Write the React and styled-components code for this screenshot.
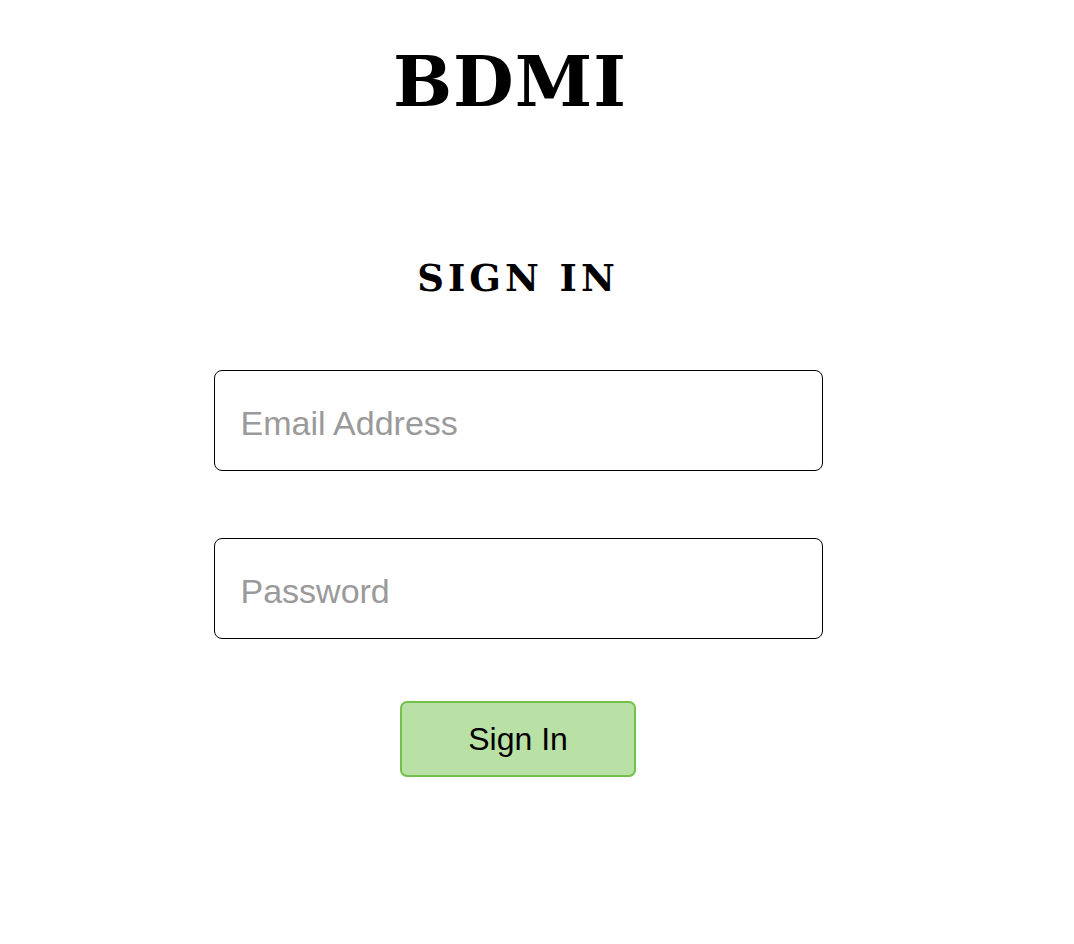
import React from "react";
import styled, { createGlobalStyle } from "styled-components";

const Global = createGlobalStyle`
  html, body { margin: 0; padding: 0; background: #ffffff; }
  body { font-family: "Liberation Sans", Arial, sans-serif; }
`;

const Page = styled.main`
  width: 1036px;
  display: flex;
  flex-direction: column;
  align-items: center;
`;

const Brand = styled.h1`
  margin: 47px 16px 0 0;
  font-family: "DejaVu Serif", "Liberation Serif", serif;
  font-weight: 700;
  font-size: 70px;
  line-height: 70px;
  letter-spacing: 1px;
  color: #000;
`;

const Heading = styled.h2`
  margin: 143px 0 0 0;
  font-family: "DejaVu Serif", "Liberation Serif", serif;
  font-weight: 700;
  font-size: 37px;
  line-height: 37px;
  letter-spacing: 4px;
  color: #000;
`;

const Form = styled.form`
  display: flex;
  flex-direction: column;
  align-items: center;
  margin-top: 73px;
`;

const Field = styled.input`
  box-sizing: border-box;
  width: 609px;
  height: 101px;
  margin-top: ${(p) => p.$gap || 0}px;
  padding: 6px 26px 0;
  border: 1px solid #000;
  border-radius: 8px;
  font-family: "Liberation Sans", Arial, sans-serif;
  font-size: 34px;
  color: #000;
  outline: none;
  background: #fff;
  &::placeholder { color: #9a9a9a; }
`;

const Button = styled.button`
  box-sizing: border-box;
  width: 236px;
  height: 76px;
  margin-top: 62px;
  background: #b9e1a6;
  border: 2px solid #74c04d;
  border-radius: 7px;
  font-family: "Liberation Sans", Arial, sans-serif;
  font-size: 32px;
  color: #000;
  cursor: pointer;
`;

export default function App() {
  return (
    <>
      <Global />
      <Page>
        <Brand>BDMI</Brand>
        <Heading>SIGN IN</Heading>
        <Form onSubmit={(e) => e.preventDefault()}>
          <Field type="email" placeholder="Email Address" />
          <Field type="password" placeholder="Password" $gap={67} />
          <Button type="submit">Sign In</Button>
        </Form>
      </Page>
    </>
  );
}
